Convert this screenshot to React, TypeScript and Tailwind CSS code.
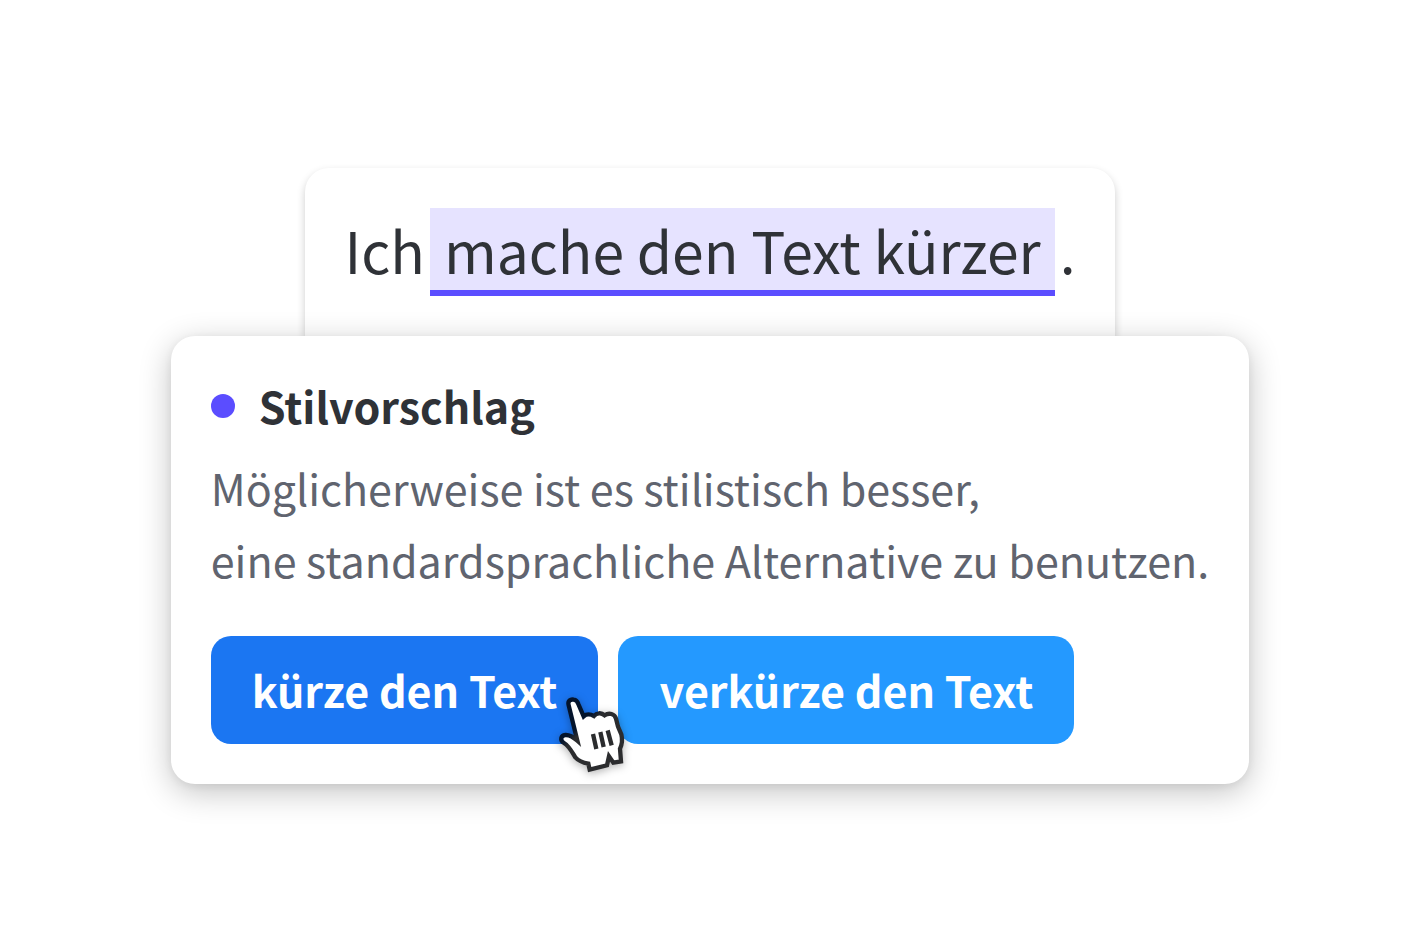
import React from "react";

const suggestions = [
  { text: "kürze den Text", className: "bg-[#1b76f2]" },
  { text: "verkürze den Text", className: "bg-[#2499ff]" },
];

function HandCursor() {
  return (
    <svg
      viewBox="0 0 330 330"
      className="pointer-events-none absolute -right-13 -bottom-11.5 z-10 size-[110px] drop-shadow-[0_2px_4px_rgba(0,0,0,0.3)]"
      aria-hidden="true"
    >
      <defs>
        <linearGradient
          id="cursor-outline"
          gradientUnits="userSpaceOnUse"
          x1="118"
          y1="136"
          x2="132"
          y2="151"
        >
          <stop offset="0" stopColor="#04142c" />
          <stop offset="1" stopColor="#2b2c2e" />
        </linearGradient>
      </defs>
      <path
        d="M86 76C82 62 92 57 101 59C109 60 113 66 115 72L131 109C139 102 151 102 162 108C170 98 184 97 194 106C207 97 224 101 228 116L234 140L244 163C248 180 246 194 240 206L243 244L220 248L207 229L201 256L149 269L145 251C129 248 115 242 106 232C95 214 87 198 72 189C59 181 62 166 76 165C90 164 100 171 112 182Z"
        fill="#fff"
        stroke="url(#cursor-outline)"
        strokeWidth="13"
      />
      <path
        d="M159 162L169 207M181 156L191 201M203 151L215 196"
        fill="none"
        stroke="#2b2c2e"
        strokeWidth="13"
      />
    </svg>
  );
}

export default function App() {
  return (
    <main className="flex min-h-screen flex-col items-center justify-center bg-white font-['Noto_Sans_CJK_SC',sans-serif] text-[#2f3237]">
      <div className="rounded-t-3xl bg-white p-10 shadow-[0_4px_8px_rgba(0,0,0,0.2)]">
        <p className="flex text-[57px] leading-[82px] whitespace-nowrap">
          Ich
          <mark className="mx-[5px] border-b-6 border-[#5b4dff] bg-[#e6e3ff] px-3.5 text-inherit">
            mache den Text kürzer
          </mark>
          .
        </p>
      </div>

      <section className="relative rounded-3xl bg-white p-10 shadow-[0_8px_32px_rgba(0,0,0,0.24),0_2px_8px_rgba(0,0,0,0.06)]">
        <div className="flex items-center gap-6">
          <span className="size-6 rounded-full bg-[#5b4dff]" />
          <h2 className="pb-0.5 text-[43px] leading-[58px] font-bold">
            Stilvorschlag
          </h2>
        </div>
        <p className="mt-[15px] text-[43px] leading-[72px] text-[#60646f]">
          Möglicherweise ist es stilistisch besser,
          <br />
          eine standardsprachliche Alternative zu benutzen.
        </p>
        <div className="mt-[41px] flex gap-5">
          {suggestions.map((suggestion, index) => (
            <div key={suggestion.text} className="relative">
              <button
                type="button"
                className={`rounded-[20px] px-[41px] pb-0.5 text-[43px] leading-[106px] font-bold text-white ${suggestion.className}`}
              >
                {suggestion.text}
              </button>
              {index === 0 && <HandCursor />}
            </div>
          ))}
        </div>
      </section>
    </main>
  );
}
